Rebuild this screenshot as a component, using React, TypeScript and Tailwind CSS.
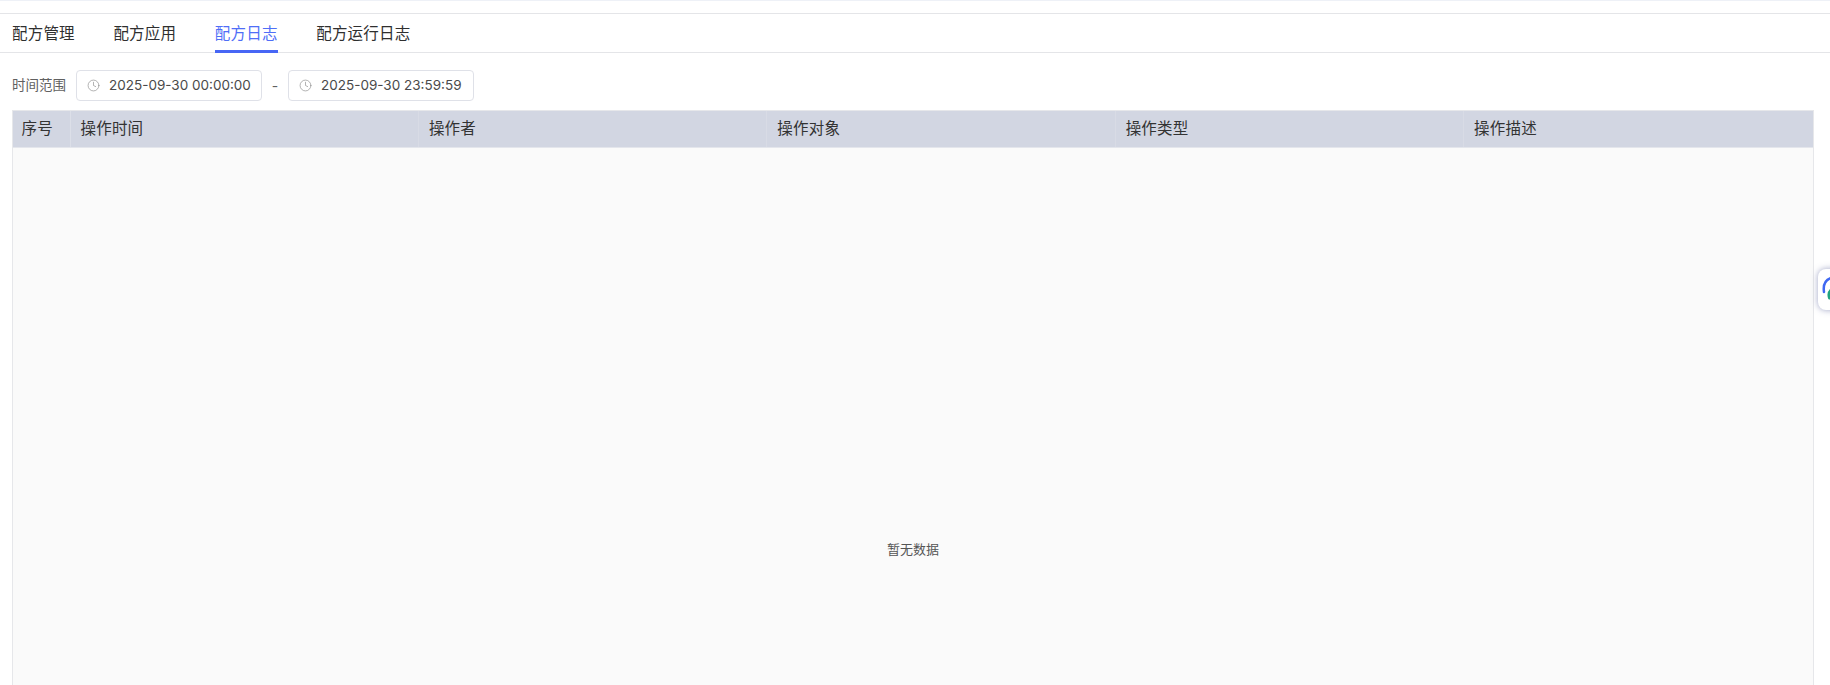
import { Clock } from 'lucide-react';

const tabs = ['配方管理', '配方应用', '配方日志', '配方运行日志'];
const columns = ['操作时间', '操作者', '操作对象', '操作类型', '操作描述'];

const DateInput = ({ value }: { value: string }) => (
  <div className="flex h-[31px] w-[186px] items-center gap-[9px] rounded-[4px] border border-[#dfe1e8] bg-white pl-[10px] text-[13.5px] whitespace-nowrap text-[#4a4a4a]">
    <Clock size={13} strokeWidth={1.2} className="shrink-0 text-[#8a8a8a]" />
    <span>{value}</span>
  </div>
);

const App = () => {
  return (
    <div className="relative h-screen w-full overflow-hidden bg-white font-['Inter','Noto_Sans_CJK_SC',sans-serif]">
      <div className="h-[1px] bg-[#eef1f7]" />
      <div className="h-[12px]" />

      {/* Tabs */}
      <nav className="flex h-[40px] gap-[38.6px] border-y border-[#e4e5e8] pl-[12px] text-[15.5px] text-[#2f2f2f]">
        {tabs.map((tab) => (
          <div
            key={tab}
            className={`-mb-[1px] flex items-center border-b-[3px] pt-[3px] tracking-[0.2px] ${
              tab === '配方日志' ? 'border-[#4766f5] text-[#4f6ef7]' : 'border-transparent'
            }`}
          >
            {tab}
          </div>
        ))}
      </nav>

      {/* Filter */}
      <div className="flex items-center pl-[12px] pt-[17px]">
        <span className="w-[64px] text-[13.5px] text-[#606060]">时间范围</span>
        <DateInput value="2025-09-30 00:00:00" />
        <span className="w-[26px] text-center text-[14px] text-[#606060]">-</span>
        <DateInput value="2025-09-30 23:59:59" />
      </div>

      {/* Table */}
      <div className="mr-[16px] ml-[12px] mt-[9px] border-x border-t border-[#e6e7ea]">
        <div className="flex h-[37px] items-center border-b border-[#e4e6ec] bg-[#d2d6e2] text-[15.5px] tracking-[0.2px] text-[#333333]">
          <div className="flex h-full w-[57.5px] items-center border-r border-[#dcdfe8] pl-[8.5px]">序号</div>
          {columns.map((col) => (
            <div key={col} className="flex h-full w-[348.4px] items-center border-r border-[#d8dbe5] pl-[10px] last:flex-1 last:border-r-0">
              {col}
            </div>
          ))}
        </div>
        <div className="flex h-[804px] items-center justify-center bg-[#fafafa] text-[13px] text-[#555555]">暂无数据</div>
      </div>

      {/* Side widget */}
      <div className="absolute left-[1818px] top-[269px] h-[41px] w-[40px] rounded-[8px] bg-white shadow-[0_0_6px_rgba(80,90,150,0.55)]">
        <svg width="12" height="41" viewBox="0 0 12 41" fill="none">
          <path d="M6 23 C5 16 7 11 13 9" stroke="#3f68f2" strokeWidth="2.5" strokeLinecap="round" />
          <path d="M11.5 29 C10.5 26 11 23 13 21" stroke="#1fa37f" strokeWidth="3" strokeLinecap="round" />
        </svg>
      </div>
    </div>
  );
};

export default App;
